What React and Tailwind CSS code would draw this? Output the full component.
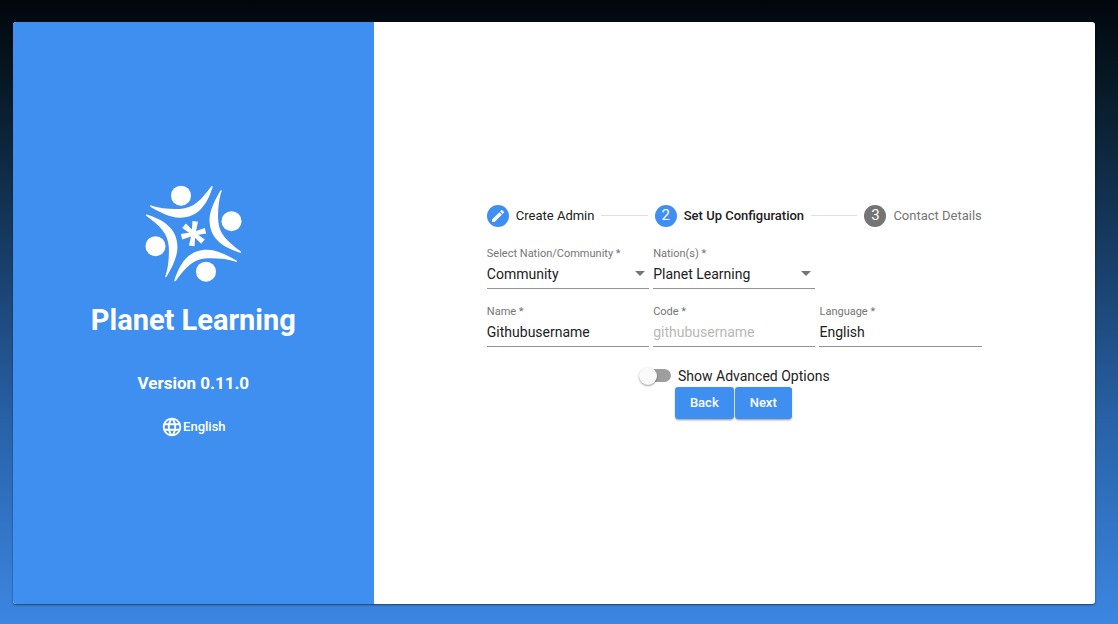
import React, { useState } from "react";

const ARM =
  "M52 97 C80 107 112 109 140 108 C182 106 204 82 235 40 Q239 37 239 42 C224 88 200 134 140 134 C108 133 78 116 52 101 Q50 98 52 97 Z";

function Logo() {
  return (
    <svg viewBox="36 36 291 291" className="size-[97px] fill-white" aria-hidden="true">
      {[0, 90, 180, 270].map((angle) => (
        <g key={angle} transform={`rotate(${angle} 181.5 182)`}>
          <circle cx="144" cy="68" r="30" />
          <path d={ARM} />
        </g>
      ))}
      {[8, 76, 130].map((angle) => (
        <path
          key={angle}
          transform={`rotate(${angle} 181.5 182)`}
          d="M173 145 H190 L187 182 L190 219 H173 L176 182 Z"
        />
      ))}
    </svg>
  );
}

function GlobeIcon() {
  return (
    <svg viewBox="0 0 24 24" className="size-[22px] fill-current" aria-hidden="true">
      <path d="M11.99 2C6.47 2 2 6.48 2 12s4.47 10 9.99 10C17.52 22 22 17.52 22 12S17.52 2 11.99 2zm6.93 6h-2.95c-.32-1.25-.78-2.45-1.38-3.56 1.84.63 3.37 1.91 4.33 3.56zM12 4.04c.83 1.2 1.48 2.53 1.91 3.96h-3.82c.43-1.43 1.08-2.76 1.91-3.96zM4.26 14C4.1 13.36 4 12.69 4 12s.1-1.36.26-2h3.38c-.08.66-.14 1.32-.14 2s.06 1.34.14 2H4.26zm.82 2h2.95c.32 1.25.78 2.45 1.38 3.56-1.84-.63-3.37-1.9-4.33-3.56zm2.95-8H5.08c.96-1.66 2.49-2.93 4.33-3.56C8.81 5.55 8.35 6.75 8.03 8zM12 19.96c-.83-1.2-1.48-2.53-1.91-3.96h3.82c-.43 1.43-1.08 2.76-1.91 3.96zM14.34 14H9.66c-.09-.66-.16-1.32-.16-2s.07-1.35.16-2h4.68c.09.65.16 1.32.16 2s-.07 1.34-.16 2zm.25 5.56c.6-1.11 1.06-2.31 1.38-3.56h2.95c-.96 1.65-2.49 2.93-4.33 3.56zM16.36 14c.08-.66.14-1.32.14-2s-.06-1.34-.14-2h3.38c.16.64.26 1.31.26 2s-.1 1.36-.26 2h-3.38z" />
    </svg>
  );
}

function PencilIcon() {
  return (
    <svg viewBox="0 0 24 24" className="size-4 fill-current" aria-hidden="true">
      <path d="M3 17.25V21h3.75L17.81 9.94l-3.75-3.75L3 17.25zM20.71 7.04a1 1 0 0 0 0-1.41l-2.34-2.34a1 1 0 0 0-1.41 0l-1.83 1.83 3.75 3.75 1.83-1.83z" />
    </svg>
  );
}

function Step({ badge, badgeClass, labelClass, children, current }) {
  return (
    <li className="flex items-center gap-[7px]" aria-current={current ? "step" : undefined}>
      <span className={`flex size-[22px] items-center justify-center rounded-full text-[15px] text-white ${badgeClass}`}>
        {badge}
      </span>
      <span className={`whitespace-nowrap text-[13px] ${labelClass}`}>{children}</span>
    </li>
  );
}

function StepLine() {
  return <li aria-hidden="true" className="h-px flex-1 bg-[#e0e0e0]" />;
}

function Field({ id, label, children }) {
  return (
    <div className="flex flex-col border-b border-[#949494] pb-1">
      <label htmlFor={id} className="mb-[3px] text-[11px] leading-[14px] text-[#757575]">
        {label} *
      </label>
      {children}
    </div>
  );
}

const CONTROL = "h-5 w-full appearance-none bg-transparent text-sm leading-5 outline-none";

function SelectField({ id, label, options }) {
  return (
    <Field id={id} label={label}>
      <div className="grid items-center">
        <select id={id} className={`${CONTROL} col-start-1 row-start-1 text-[#212121]`}>
          {options.map((o) => (
            <option key={o}>{o}</option>
          ))}
        </select>
        <svg
          viewBox="0 0 10 5"
          className="pointer-events-none col-start-1 row-start-1 mr-1 h-[5px] w-[10px] justify-self-end fill-[#757575]"
          aria-hidden="true"
        >
          <path d="M0 0h10L5 5z" />
        </svg>
      </div>
    </Field>
  );
}

const BUTTON =
  "h-8 rounded-[3px] bg-[#3f8ff0] px-[15px] text-[13px] font-medium text-white shadow-[0_2px_2px_-1px_rgba(0,0,0,0.3),0_1px_3px_rgba(0,0,0,0.15)]";

export default function App() {
  const [name, setName] = useState("Githubusername");
  const [language, setLanguage] = useState("English");
  return (
    <div className="flex min-h-screen bg-[linear-gradient(to_bottom,#01060d_0%,#061722_12%,#16395f_38%,#2862a8_68%,#3c86e2_100%)] pt-[22px] pr-[23px] pb-5 pl-[13px] font-[Roboto,sans-serif] text-[#212121]">
      <main className="grid flex-1 grid-cols-3 overflow-hidden rounded-[3px] bg-white shadow-[0_1px_2px_rgba(0,0,0,0.5)]">
        <section className="flex flex-col items-center justify-center bg-[#3f8ff0] pb-[3px] text-white">
          <Logo />
          <h1 className="mt-5 text-[29px] leading-9 font-bold">Planet Learning</h1>
          <p className="mt-[33px] text-[17px] leading-6 font-bold">Version 0.11.0</p>
          <button type="button" className="mt-5 flex h-6 items-center text-[13px] font-medium">
            <GlobeIcon />
            English
          </button>
        </section>

        <section className="col-span-2 flex items-center justify-center px-6 pb-[3px]">
          <form className="w-full max-w-[495px]" onSubmit={(e) => e.preventDefault()}>
            <ol className="flex items-center gap-[7px]">
              <Step badge={<PencilIcon />} badgeClass="bg-[#3f8ff0]" labelClass="">
                Create Admin
              </Step>
              <StepLine />
              <Step badge="2" badgeClass="bg-[#3f8ff0]" labelClass="font-medium" current>
                Set Up Configuration
              </Step>
              <StepLine />
              <Step badge="3" badgeClass="bg-[#757575]" labelClass="text-[#757575]">
                Contact Details
              </Step>
            </ol>

            <div className="mt-5 grid grid-cols-3 gap-x-1 gap-y-4">
              <SelectField id="kind" label="Select Nation/Community" options={["Community", "Nation"]} />
              <SelectField id="nation" label="Nation(s)" options={["Planet Learning"]} />
              <div className="col-start-1">
                <Field id="name" label="Name">
                  <input id="name" className={CONTROL} value={name} onChange={(e) => setName(e.target.value)} />
                </Field>
              </div>
              <Field id="code" label="Code">
                <input id="code" disabled className={`${CONTROL} text-[#b8b8b8]`} value={name.toLowerCase()} />
              </Field>
              <Field id="language" label="Language">
                <input
                  id="language"
                  className={CONTROL}
                  value={language}
                  onChange={(e) => setLanguage(e.target.value)}
                />
              </Field>
            </div>

            <div className="mt-[19px] flex items-center justify-center gap-[7px]">
              <input
                id="advanced"
                type="checkbox"
                role="switch"
                className="ml-1 flex h-[13px] w-7 appearance-none items-center rounded-full bg-[#9e9e9e] before:-ml-1 before:size-[18px] before:shrink-0 before:rounded-full before:bg-[#fafafa] before:shadow-[0_1px_2px_rgba(0,0,0,0.4)] checked:bg-[#9fc7f8] checked:before:ml-3.5 checked:before:bg-[#3f8ff0]"
              />
              <label htmlFor="advanced" className="text-sm leading-5">
                Show Advanced Options
              </label>
            </div>
            <div className="mt-px flex justify-center gap-px pr-0.5">
              <button type="button" className={BUTTON}>
                Back
              </button>
              <button type="submit" className={BUTTON}>
                Next
              </button>
            </div>
          </form>
        </section>
      </main>
    </div>
  );
}
